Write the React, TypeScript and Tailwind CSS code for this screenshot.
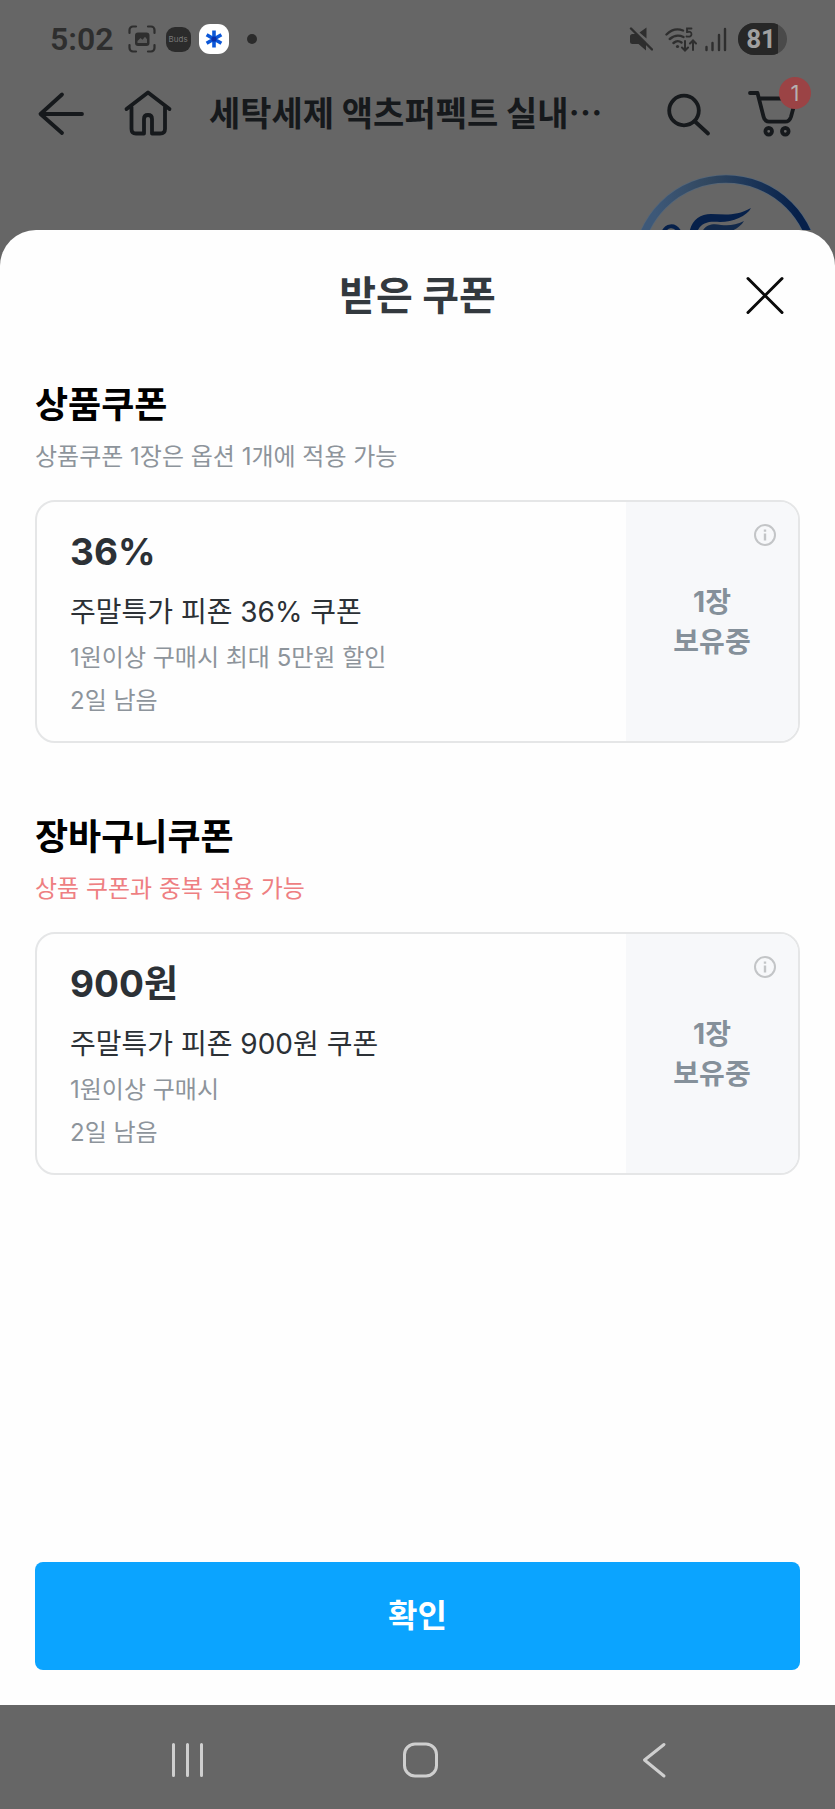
import type { ReactNode } from "react";

type Coupon = {
  amount: string;
  name: string;
  condition: string;
  remaining: string;
  count: string;
};

type CouponGroup = {
  id: string;
  title: string;
  hint: string;
  highlight: boolean;
  coupons: Coupon[];
};

const GROUPS: CouponGroup[] = [
  {
    id: "product",
    title: "상품쿠폰",
    hint: "상품쿠폰 1장은 옵션 1개에 적용 가능",
    highlight: false,
    coupons: [
      {
        amount: "36%",
        name: "주말특가 피죤 36% 쿠폰",
        condition: "1원이상 구매시 최대 5만원 할인",
        remaining: "2일 남음",
        count: "1장",
      },
    ],
  },
  {
    id: "cart",
    title: "장바구니쿠폰",
    hint: "상품 쿠폰과 중복 적용 가능",
    highlight: true,
    coupons: [
      {
        amount: "900원",
        name: "주말특가 피죤 900원 쿠폰",
        condition: "1원이상 구매시",
        remaining: "2일 남음",
        count: "1장",
      },
    ],
  },
];

export default function App() {
  return (
    <div className="flex min-h-screen flex-col bg-[#666666] font-['Inter','Noto_Sans_CJK_KR',sans-serif]">
      <StatusBar />
      <PageHeader />
      <div className="relative h-[78px] overflow-hidden">
        <BrandMark />
      </div>
      <CouponSheet />
      <SystemNav />
    </div>
  );
}

function StatusBar() {
  return (
    <div className="flex h-[76px] items-center pt-0.5 pr-12 pl-[50px] text-[#2e2e2e]">
      <span className="font-['Roboto',sans-serif] text-[32px] leading-8 font-semibold">5:02</span>
      <svg className="ml-[14px] size-7" viewBox="0 0 28 28" fill="none" stroke="currentColor" strokeWidth="2.2" strokeLinecap="round">
        <path d="M8 1.5H5A3.5 3.5 0 0 0 1.5 5v3M20 1.5h3A3.5 3.5 0 0 1 26.5 5v3M8 26.5H5A3.5 3.5 0 0 1 1.5 23v-3M20 26.5h3a3.5 3.5 0 0 0 3.5-3.5v-3" />
        <rect x="7" y="7.5" width="14.5" height="13.5" rx="3" fill="currentColor" stroke="none" />
        <path d="M9.5 18v-2l3-3 2 1.8 2.5-3 2 2.5V18z" fill="#5c5c5c" stroke="none" />
      </svg>
      <span className="ml-[10px] flex size-[25px] items-center justify-center rounded-[9px] bg-[#2b2b2b] text-[8px] text-[#777777]">
        Buds
      </span>
      <span className="ml-2 flex size-[30px] items-center justify-center rounded-[11px] bg-white">
        <svg className="size-5" viewBox="0 0 20 20" stroke="#0b57d8" strokeWidth="3.6">
          <path d="M10 1.5v17M2.6 5.8l14.8 8.4M17.4 5.8L2.6 14.2" />
          <circle cx="10" cy="10" r="2.6" fill="#0a2fa8" stroke="none" />
        </svg>
      </span>
      <span className="ml-[18px] size-[10px] rounded-full bg-[#2b2b2b]" />

      <svg className="ml-auto h-[26px] w-6" viewBox="0 0 24 26">
        <path d="M1 10.5Q1 8 3.500 8H8L17 16v8.5L9.5 18H3.5Q1 18 1 15.5Z" fill="currentColor" />
        <path d="M10.5 6.5L17.5 1.5V12.5Z" fill="currentColor" />
        <path d="M3 1.5L24 22" stroke="#666666" strokeWidth="1.5" />
        <path d="M2 2.5L23 23.5" stroke="currentColor" strokeWidth="2.4" strokeLinecap="round" />
      </svg>
      <svg className="ml-3 h-[26px] w-8" viewBox="0 0 32 26" fill="none" stroke="currentColor" strokeWidth="2.4" strokeLinecap="round">
        <path d="M1.5 8.5Q9 1 18 4.5M4.8 13Q11 7.5 18.5 11M8.5 17Q12.5 13.5 16.5 16.5" />
        <circle cx="12.5" cy="20.5" r="1.6" fill="currentColor" stroke="none" />
        <path d="M20 15v9M17 21.5l3 3 3-3M28 24v-9M25 17.5l3-3 3 3" strokeWidth="2" />
        <path d="M26.5 2.5h-4.5v3.5q4.5-1 4.5 2.2t-5 2.3" strokeWidth="1.8" />
      </svg>
      <svg className="ml-2 h-[26px] w-[22px]" viewBox="0 0 22 26" stroke="currentColor" strokeWidth="2.4" strokeLinecap="round">
        <path d="M1.5 21v3M7.5 17v7M14 9v15M20 3v21" />
      </svg>
      <span className="ml-[11px] flex h-8 w-[49px] overflow-hidden rounded-full bg-[#4a4a4a]">
        <span className="flex w-10 items-center justify-end bg-[#272727] pr-0.5 font-['Roboto',sans-serif] text-[26px] leading-8 font-bold text-[#a0a0a0]">
          81
        </span>
      </span>
    </div>
  );
}

function PageHeader() {
  return (
    <header className="flex h-[76px] items-center pr-[37px] pl-[35px] text-[#16191c]">
      <IconButton label="뒤로">
        <path d="M47 26H6M27 6.5L5.500 26 27 45" />
      </IconButton>
      <span className="w-[34px] shrink-0" />
      <IconButton label="홈">
        <path d="M5.5 21L27 4.5 48.5 21M10.5 19v22q0 4.5 4.5 4.5h8V31q0-4 4-4t4 4v14.5h8q5 0 5-4.500V19" />
      </IconButton>
      <h1 className="ml-[36px] min-w-0 flex-1 pb-1 font-['Noto_Sans_CJK_KR',sans-serif] text-[34px] leading-[48px] font-bold whitespace-nowrap">
        세탁세제 액츠퍼펙트 실내…
      </h1>
      <IconButton label="검색">
        <circle cx="22" cy="22.5" r="14.8" />
        <path d="M33 33.5L46 45.5" />
      </IconButton>
      <span className="w-8 shrink-0" />
      <IconButton label="장바구니" badge="1">
        <path d="M4 5h7.5l6 23.5q1.4 5.2 5.5 5.2h16q4.5 0 6-5L50 10.5H13" />
        <circle cx="22.7" cy="43.3" r="3.3" />
        <circle cx="39.3" cy="43.3" r="3.3" />
      </IconButton>
    </header>
  );
}

function IconButton({ label, badge, children }: { label: string; badge?: string; children: ReactNode }) {
  return (
    <button type="button" aria-label={label} className="relative shrink-0">
      <svg
        className="size-[52px]"
        viewBox="0 0 52 52"
        fill="none"
        stroke="currentColor"
        strokeWidth="3.8"
        strokeLinecap="round"
        strokeLinejoin="round"
      >
        {children}
      </svg>
      {badge && (
        <span className="absolute -top-[11px] -right-[13px] flex size-8 items-center justify-center rounded-full bg-[#9b4345] text-[22px] leading-8 text-[#b5b0b0]">
          {badge}
        </span>
      )}
    </button>
  );
}

// Round brand seal of the product, mostly hidden behind the sheet.
function BrandMark() {
  return (
    <svg className="absolute top-[18px] right-[11px] size-[196px]" viewBox="0 0 196 196" fill="none">
      <defs>
        <linearGradient id="seal" x1="0" y1="0" x2="1" y2="0">
          <stop offset="0.1" stopColor="#3d5878" />
          <stop offset="0.4" stopColor="#31475f" />
          <stop offset="0.6" stopColor="#20395a" />
          <stop offset="0.9" stopColor="#06204a" />
        </linearGradient>
      </defs>
      <circle cx="98" cy="98" r="89" stroke="#556678" strokeWidth="9" />
      <circle cx="98" cy="98" r="89" stroke="url(#seal)" strokeWidth="7.5" />
      <g transform="translate(3 4)">
        <path d="M58 62C59 47 68 40 80 40c12 0 24 3 40-6-4 8-18 14-31 14-12-1-21 0-24 14z" fill="#06204a" />
        <path d="M70 60c4-10 12-11 20-9 8 1 15 0 23-4-4 7-13 11-22 13z" fill="#12294a" />
        <path d="M32 60c2-9 12-11 17-1" stroke="#06204a" strokeWidth="4" />
      </g>
    </svg>
  );
}

function CouponSheet() {
  return (
    <section
      role="dialog"
      aria-labelledby="sheet-title"
      className="relative flex flex-1 flex-col rounded-t-[36px] bg-[#fefefe] px-[35px] pb-[35px]"
    >
      <div className="relative flex h-[132px] items-center justify-center">
        <h2 id="sheet-title" className="text-[40px] leading-[48px] font-bold text-[#33393e]">
          받은 쿠폰
        </h2>
        <button type="button" aria-label="닫기" className="absolute right-[14px]">
          <svg className="size-[42px]" viewBox="0 0 42 42" stroke="#0a0a0a" strokeWidth="3" strokeLinecap="round">
            <path d="M4 3.5l34 34M38 3.5L4 37.5" />
          </svg>
        </button>
      </div>

      <div className="flex flex-col gap-[70px] pt-[19px]">
        {GROUPS.map((group) => (
          <section key={group.id}>
            <h3 className="text-[36px] leading-[48px] font-bold text-black">{group.title}</h3>
            <p
              className={
                group.highlight
                  ? "mt-3 text-[24px] leading-8 text-[#ee7f82]"
                  : "mt-3 text-[24px] leading-8 text-[#8d949b]"
              }
            >
              {group.hint}
            </p>
            {group.coupons.map((coupon) => (
              <CouponCard key={coupon.name} coupon={coupon} />
            ))}
          </section>
        ))}
      </div>

      <button
        type="button"
        className="mt-auto h-[108px] w-full rounded-lg bg-[#0ba4ff] text-[32px] leading-[48px] font-bold text-white"
      >
        확인
      </button>
    </section>
  );
}

function CouponCard({ coupon }: { coupon: Coupon }) {
  return (
    <article className="mt-[27px] flex overflow-hidden rounded-[20px] border-2 border-[#e5e6e7]">
      <div className="min-w-0 flex-1 pt-[26px] pb-6 pl-[33px]">
        <p className="text-[37px] leading-[48px] font-bold text-[#2c3136]">{coupon.amount}</p>
        <p className="mt-4 text-[28px] leading-10 text-[#2c3136]">{coupon.name}</p>
        <p className="mt-[10px] text-[24px] leading-8 text-[#8d949b]">{coupon.condition}</p>
        <p className="mt-[11px] text-[24px] leading-8 text-[#8d949b]">{coupon.remaining}</p>
      </div>
      <div className="relative flex w-[172px] flex-col items-center justify-center bg-[#f7f8fa] text-[28px] leading-10 font-bold text-[#85909a]">
        <span>{coupon.count}</span>
        <span>보유중</span>
        <button type="button" aria-label="쿠폰 안내" className="absolute top-[21px] right-[21px]">
          <svg className="size-6" viewBox="0 0 24 24" fill="none" stroke="#c3c5c7" strokeWidth="2">
            <circle cx="12" cy="12" r="10" />
            <path d="M12 10.5v7M12 6.5v2.2" strokeWidth="2.4" />
          </svg>
        </button>
      </div>
    </article>
  );
}

function SystemNav() {
  return (
    <nav className="grid h-[104px] grid-cols-3 items-center justify-items-center pt-1.5 pr-[65px] pl-[71px] text-[#cfcfcf]">
      <button type="button" aria-label="최근 앱">
        <svg className="size-10" viewBox="0 0 40 40" stroke="currentColor" strokeWidth="3" strokeLinecap="round">
          <path d="M5.5 4.5v31M19.5 4.5v31M33.5 4.5v31" />
        </svg>
      </button>
      <button type="button" aria-label="홈 화면">
        <svg className="size-10" viewBox="0 0 40 40" fill="none" stroke="currentColor" strokeWidth="3">
          <rect x="3.5" y="4" width="32" height="32" rx="10.5" />
        </svg>
      </button>
      <button type="button" aria-label="이전">
        <svg className="size-10" viewBox="0 0 40 40" fill="none" stroke="currentColor" strokeWidth="3" strokeLinecap="round" strokeLinejoin="round">
          <path d="M30 4.5L10.5 20 30 36" />
        </svg>
      </button>
    </nav>
  );
}
